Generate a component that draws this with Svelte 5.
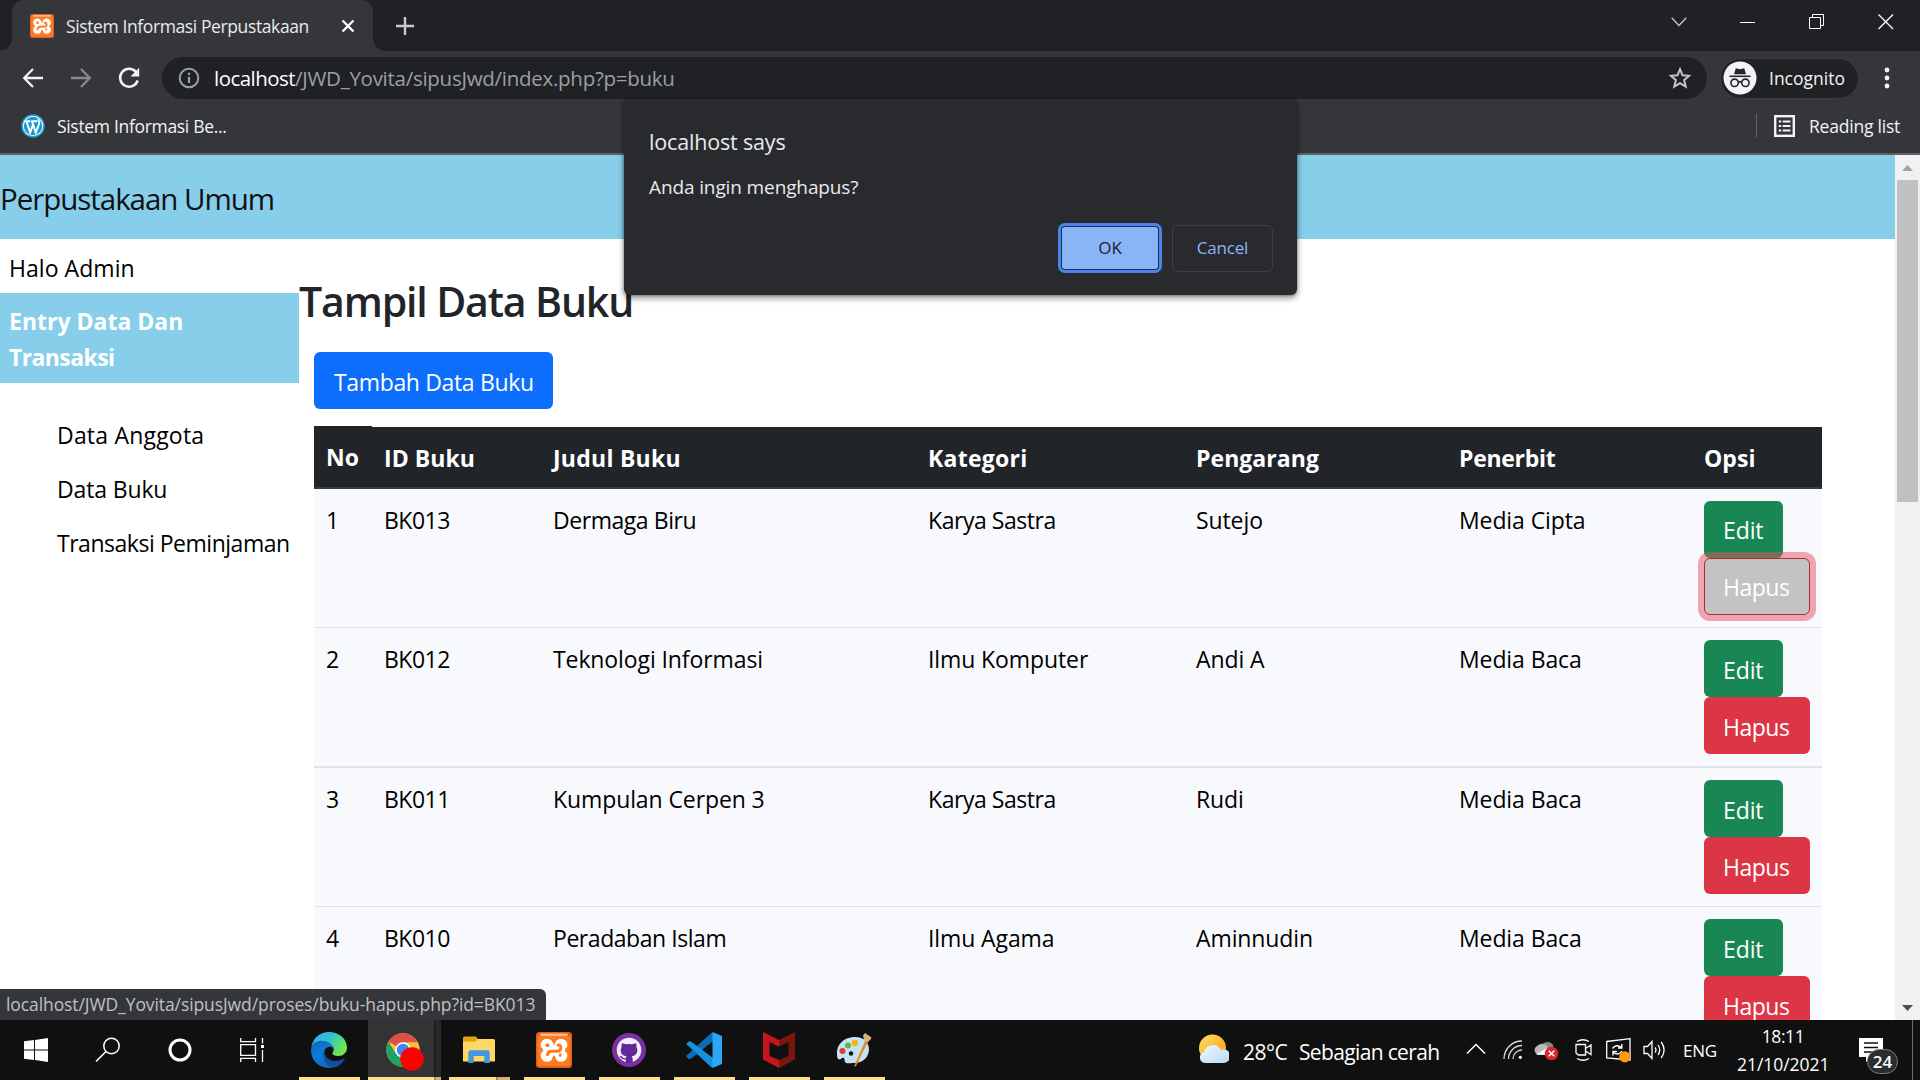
<script>
  const rows = [
    { no: 1, id: 'BK013', judul: 'Dermaga Biru', kategori: 'Karya Sastra', pengarang: 'Sutejo', penerbit: 'Media Cipta', active: true },
    { no: 2, id: 'BK012', judul: 'Teknologi Informasi', kategori: 'Ilmu Komputer', pengarang: 'Andi A', penerbit: 'Media Baca', thick: true },
    { no: 3, id: 'BK011', judul: 'Kumpulan Cerpen 3', kategori: 'Karya Sastra', pengarang: 'Rudi', penerbit: 'Media Baca' },
    { no: 4, id: 'BK010', judul: 'Peradaban Islam', kategori: 'Ilmu Agama', pengarang: 'Aminnudin', penerbit: 'Media Baca' }
  ];
  const narrow = ['Karya Sastra', 'Peradaban Islam', 'Dermaga Biru'];
</script>

{#snippet xampp(size)}
  <svg width={size} height={size} viewBox="0 0 36 36">
    <rect width="36" height="36" rx="3.5" fill="#e0601c" />
    <rect x="1.5" y="4" width="33" height="30" rx="2" fill="#fb7a24" />
    <rect x="4" y="1.5" width="28" height="2.6" rx="1.3" fill="#fbb78b" />
    <g fill="#fff"><circle cx="11" cy="13" r="6.300" /><circle cx="25" cy="13" r="6.300" /><circle cx="11" cy="23.500" r="6.300" /><circle cx="25" cy="23.500" r="6.300" /><rect x="7.500" y="12.500" width="21" height="11" /></g>
    <g fill="none" stroke="#fb7a24" stroke-width="3" stroke-linecap="round"><path d="M18 6.500V9.500" stroke-width="2.500" /><path d="M11.500 22.800Q12 19.300 15.500 19.300H21Q24.800 19 24.800 15.800 24.800 12.500 22 13.200" /><path d="M18 26V30M24.200 22.800V23.300" /><circle cx="11.500" cy="13.300" r="1" stroke-width="2" /></g>
    <path d="M3 18 6.500 15.800V20.500ZM33 18 29.500 15.800V20.500Z" fill="#fb7a24" />
  </svg>
{/snippet}

<div class="screen">
  <div class="tabstrip">
    <div class="tab">
      <span class="favicon">{@render xampp(24)}</span>
      <span class="tabtitle">Sistem Informasi Perpustakaan</span>
      <svg class="tabclose" width="14" height="14" viewBox="0 0 14 14"><path d="M1.500 1.500 12.500 12.500M12.500 1.500 1.500 12.500" stroke="#fff" stroke-width="2.400" /></svg>
    </div>
    <svg class="newtab" width="18" height="18" viewBox="0 0 18 18"><path d="M9 0V18M0 9H18" stroke="#c8cacd" stroke-width="2.400" /></svg>
    <div class="winctl">
      <svg width="16" height="10" viewBox="0 0 16 10"><path d="M.7 .7 8 8.500 15.300 .7" fill="none" stroke="#c5c6c8" stroke-width="1.300" /></svg>
      <svg width="16" height="16" viewBox="0 0 16 16"><path d="M0 8.500H15" stroke="#fff" /></svg>
      <svg width="16" height="16" viewBox="0 0 16 16"><path d="M.5 3.500H11.500V14.500H.5ZM3.500 3.500V.5H14.500V11.500H11.500" fill="none" stroke="#fff" /></svg>
      <svg width="16" height="16" viewBox="0 0 16 16"><path d="M.5 .5 15 15M15 .5 .5 15" stroke="#fff" stroke-width="1.300" /></svg>
    </div>
  </div>

  <div class="toolbar">
    <svg class="nav" width="24" height="24" viewBox="0 0 24 24"><path d="M22 12H4M12 3 3.200 12 12 21" fill="none" stroke="#f1f3f4" stroke-width="2.300" /></svg>
    <svg class="nav" width="24" height="24" viewBox="0 0 24 24"><path d="M2 12H20M12 3 20.800 12 12 21" fill="none" stroke="#88898c" stroke-width="2.300" /></svg>
    <svg class="nav" width="24" height="24" viewBox="0 0 24 24"><path d="M19.500 6.500A9 9 0 1 0 20.700 14.500" fill="none" stroke="#f1f3f4" stroke-width="2.500" /><path d="M22.200 1.800V10.500H13.500Z" fill="#f1f3f4" /></svg>
    <div class="omnibox">
      <svg width="22" height="22" viewBox="0 0 22 22"><circle cx="11" cy="11" r="9.300" fill="none" stroke="#9aa0a6" stroke-width="2" /><path d="M11 9.800V16M11 5.800V8" stroke="#9aa0a6" stroke-width="2.200" /></svg>
      <span class="url"><b>localhost</b>/JWD_Yovita/sipusJwd/index.php?p=buku</span>
      <svg width="22" height="22" viewBox="0 0 22 22"><path d="M11 2.200 13.500 8.300 20.200 8.800 15.100 13.100 16.700 19.600 11 16.100 5.300 19.600 6.900 13.100 1.800 8.800 8.500 8.300Z" fill="none" stroke="#c4c6c9" stroke-width="2" /></svg>
    </div>
    <div class="incog">
      <svg width="34" height="34" viewBox="0 0 34 34">
        <circle cx="17" cy="17" r="16.500" fill="#f1f3f4" />
        <path d="M12.800 7.300 17 8.200 21.200 7.300 23 13.300H11Z" fill="#25262a" />
        <path d="M6.500 15.300H27.500" stroke="#25262a" stroke-width="1.600" />
        <g fill="none" stroke="#25262a" stroke-width="1.600"><circle cx="11.600" cy="21.800" r="3.700" /><circle cx="22.400" cy="21.800" r="3.700" /><path d="M15.300 21.300Q17 20 18.700 21.300" /></g>
      </svg>
      <span>Incognito</span>
    </div>
    <svg class="dots" width="6" height="22" viewBox="0 0 6 22"><g fill="#f1f3f4"><circle cx="3" cy="3" r="2.400" /><circle cx="3" cy="11" r="2.400" /><circle cx="3" cy="19" r="2.400" /></g></svg>
  </div>

  <div class="bookmarks">
    <svg width="24" height="24" viewBox="0 0 24 24">
      <circle cx="12" cy="12" r="11.800" fill="#1a9ad3" /><circle cx="12" cy="12" r="10.200" fill="#fff" /><circle cx="12" cy="12" r="9.200" fill="#1a9ad3" />
      <path d="M3.800 7.300H9.400M10.300 7.300H16M5.500 7.500 9.200 18.500 12 10.500M11 7.500 14.800 18.500 18.200 9.500Q18.300 7 16.800 5.300" fill="none" stroke="#fff" stroke-width="2" />
    </svg>
    <span class="bm">Sistem Informasi Be...</span>
    <i class="sep"></i>
    <svg width="21" height="22" viewBox="0 0 21 22"><rect x="1.200" y="1.200" width="18.600" height="19.600" fill="none" stroke="#f1f3f4" stroke-width="2.400" /><path d="M4.800 6.500H7.200M8.700 6.500H16.400M4.800 11H7.200M8.700 11H16.400M4.800 15.500H7.200M8.700 15.500H16.400" stroke="#f1f3f4" stroke-width="2.200" /></svg>
    <span class="rl">Reading list</span>
  </div>

  <div class="page">
    <div class="doc">
      <header>Perpustakaan Umum</header>
      <div class="body">
        <aside>
          <p class="halo">Halo Admin</p>
          <p class="entry"><span>Entry Data Dan</span><br /><span class="tr">Transaksi</span></p>
          <ul>
            <li class="ag">Data Anggota</li>
            <li class="db">Data Buku</li>
            <li class="tp">Transaksi Peminjaman</li>
          </ul>
        </aside>
        <main>
          <h2>Tampil Data Buku</h2>
          <span class="btn blue">Tambah Data Buku</span>
          <div class="table">
            <div class="row head">
              <div class="first">No</div><div>ID Buku</div><div class="jb">Judul Buku</div><div class="jb">Kategori</div><div>Pengarang</div><div class="pb">Penerbit</div><div>Opsi</div>
            </div>
            {#each rows as r}
              <div class="row" class:thick={r.thick}>
                <div>{r.no}</div>
                <div class="tight">{r.id}</div>
                <div class:narrow={narrow.includes(r.judul)}>{r.judul}</div>
                <div class:narrow={narrow.includes(r.kategori)}>{r.kategori}</div>
                <div>{r.pengarang}</div>
                <div>{r.penerbit}</div>
                <div class="ops"><span class="btn green">Edit</span><span class="btn red" class:active={r.active}>Hapus</span></div>
              </div>
            {/each}
          </div>
        </main>
      </div>
    </div>
    <div class="scroll">
      <svg width="25" height="25" viewBox="0 0 25 25"><path d="M7 16 12.500 10 18 16Z" fill="#a3a3a3" /></svg>
      <div class="thumb"></div>
      <svg width="25" height="25" viewBox="0 0 25 25"><path d="M7 10 12.500 16 18 10Z" fill="#505050" /></svg>
    </div>
    <div class="status">localhost/JWD_Yovita/sipusJwd/proses/buku-hapus.php?id=BK013</div>
  </div>

  <div class="taskbar">
    <div class="sys">
      <svg width="24" height="24" viewBox="0 0 24 24"><path d="M0 3.300 10 2V11.500H0ZM11 1.900 24 0V11.500H11ZM0 12.500H10V22L0 20.700ZM11 12.500H24V24L11 22.100Z" fill="#fff" /></svg>
    </div>
    <div class="sys">
      <svg width="26" height="26" viewBox="0 0 26 26"><circle cx="16.500" cy="9" r="7.700" fill="none" stroke="#fff" stroke-width="1.500" /><path d="M11 14.500 1 24.500" stroke="#fff" stroke-width="1.600" /></svg>
    </div>
    <div class="sys">
      <svg width="24" height="24" viewBox="0 0 24 24"><circle cx="12" cy="12" r="10" fill="none" stroke="#fff" stroke-width="3" /></svg>
    </div>
    <div class="sys">
      <svg width="24" height="24" viewBox="0 0 24 24"><path d="M.7 0V3.700H15.500V0M.7 24V20.300H15.500V24M.7 6.700H15.500V17.300H.7ZM22.500 0V5.500M22.500 12V24" fill="none" stroke="#fff" stroke-width="1.300" /><rect x="21" y="7" width="3" height="3" fill="#fff" /></svg>
    </div>
    <div class="app edge">
      <svg width="36" height="36" viewBox="0 0 36 36">
        <defs>
          <linearGradient id="eg" x1="0" y1="0" x2="1" y2=".5"><stop offset="0" stop-color="#35a8ee" /><stop offset=".5" stop-color="#2fc3d0" /><stop offset="1" stop-color="#6fe84a" /></linearGradient>
          <linearGradient id="eb" x1="0" y1="0" x2=".6" y2="1"><stop offset="0" stop-color="#1464b4" /><stop offset=".5" stop-color="#0b7bdc" /><stop offset="1" stop-color="#0f6ac4" /></linearGradient>
        </defs>
        <path d="M.3 15C2 5.500 9.500 0 18 0 28 0 36 7 36 15.500 36 21 32 24 27.500 24 23.500 24 21.300 22.500 21.300 21.500 21.300 20.500 22.700 20 22.700 17.500 22.700 14 19 11 14 9.500 7 9 2 12 .3 15Z" fill="url(#eg)" />
        <path d="M.2 16C1.500 11 6 8.700 11 8.700 17.500 8.700 22 12.500 22.500 16.500 20 13.500 14.500 14.500 13 19.500 11.500 27 17.500 33 22.500 35.300 10 38.500-1.500 29 .2 16Z" fill="url(#eb)" />
        <path d="M14.300 16.500C12 22 16 28.500 23 29 28 29.200 31 27.500 33 26.500 34 26.300 33.800 27.300 33 28.500 30 32.500 26 35.200 22.500 35.600 13 34 10 23 14.300 16.500Z" fill="#12509c" />
      </svg>
    </div>
    <div class="app chrome">
      <svg width="38" height="38" viewBox="0 0 38 38">
        <circle cx="17" cy="17" r="16.700" fill="#f7c33b" />
        <path d="M17 17 2.500 8.700A16.700 16.700 0 0 1 31.500 8.700L31.800 9.300H17Z" fill="#dd5144" />
        <path d="M2.500 8.700A16.700 16.700 0 0 0 17 33.700L24 20.500 17 17 9.800 20.500Z" fill="#1da362" />
        <circle cx="17" cy="17" r="7.800" fill="#fff" /><circle cx="17" cy="17" r="6.200" fill="#4285f4" />
        <circle cx="26" cy="26" r="11.800" fill="#fe0000" />
      </svg>
    </div>
    <div class="app files">
      <svg width="32" height="28" viewBox="0 0 32 28"><path d="M0 2Q0 .5 1.500 .5H13L15 3V7H0Z" fill="#e0a30c" /><path d="M0 5.500H12.500L15 3H30.500Q32 3 32 4.500V25.500H0Z" fill="#ffd765" /><path d="M5.300 27V16.500Q5.300 14.300 7.500 14.300H24.500Q26.700 14.300 26.700 16.500V27H21.300V20H10.700V27Z" fill="#3f9ae0" /></svg>
    </div>
    <div class="app">{@render xampp(36)}</div>
    <div class="app">
      <svg width="36" height="36" viewBox="0 0 36 36">
        <circle cx="18" cy="18" r="17" fill="#7a2fa3" /><circle cx="18" cy="18" r="12.300" fill="#f2eef7" />
        <path d="M11 11.200 15 12.300Q18 11.600 21 12.300L25 11.200Q26 13.500 25.500 15.200 27 17.500 26 20.500 25 23.500 20.800 24.200 22 25.500 21.700 31H14.700V27.500Q11 28 9.500 25.500L8.500 23.800Q11 24 12 25.800 13.500 26.800 15 25.700L15.400 24.200Q11 23.500 10 20.500 9.200 17.500 10.500 15.200 10 13.500 11 11.200Z" fill="#60289a" />
      </svg>
    </div>
    <div class="app">
      <svg width="36" height="36" viewBox="0 0 36 36"><path d="M0 24 2.500 27 5 26.800 27 9V.5L25.500 .7Z" fill="#0b6db5" /><path d="M.2 12 2.500 9.500 5 9.600 27 26V35.700L25 35Z" fill="#1490df" /><path d="M26.500 0 36 4V32L26.500 36Z" fill="#2aa7f5" /></svg>
    </div>
    <div class="app">
      <svg width="32" height="36" viewBox="0 0 32 36"><path d="M0 0 16 8V14.500L6.500 10V24L16 28V36L0 27.500Z" fill="#c4161c" /><path d="M32 0 16 8V14.500L25.500 10V24L16 28V36L32 27.500Z" fill="#7b150f" /></svg>
    </div>
    <div class="app">
      <svg width="36" height="36" viewBox="0 0 36 36">
        <path d="M17 5C27 4 33 10 33 17 33 25 27 31 18 31 13 31 10 32 9 30 8 27 9 25 6 26 3 29 1 27 1 23 0 13 7 6 17 5Z" fill="#c4e3f2" />
        <circle cx="6.500" cy="19" r="3" fill="#e43b36" /><circle cx="12" cy="13.500" r="3" fill="#5fb648" /><circle cx="19" cy="11" r="3.300" fill="#f7b417" /><circle cx="15" cy="21.500" r="2.200" fill="#101010" />
        <path d="M29.500 8 32 9.500 20 34 17.800 35Z" fill="#e7882a" /><path d="M27 3.500 29 1 35.500 5.500 34.500 7.500 31.500 10.500 28.300 8.500Z" fill="#dcb27c" />
      </svg>
    </div>

    <div class="tray">
      <svg class="weather" width="30" height="30" viewBox="0 0 30 30">
        <defs><linearGradient id="sun" x1="0" y1="0" x2="1" y2="1"><stop offset="0" stop-color="#ffdf6a" /><stop offset="1" stop-color="#fb9a0c" /></linearGradient><linearGradient id="cl" x1="0" y1="0" x2="1" y2="1"><stop offset="0" stop-color="#eef8ff" /><stop offset="1" stop-color="#b5dcf6" /></linearGradient></defs>
        <circle cx="13.500" cy="14" r="13.500" fill="url(#sun)" />
        <path d="M6 29A5.500 5.500 0 0 1 5 18.200 9 9 0 0 1 21.800 16 6.800 6.800 0 1 1 23.500 29Z" fill="url(#cl)" />
      </svg>
      <span class="temp">28°C</span><span class="cond">Sebagian cerah</span>
      <svg class="up" width="20" height="12" viewBox="0 0 20 12"><path d="M1 10.500 10 1.500 19 10.500" fill="none" stroke="#fff" stroke-width="1.500" /></svg>
      <svg class="wifi" width="20" height="20" viewBox="0 0 20 20"><g fill="none" stroke="#dcdcdc" stroke-width="1.300"><path d="M1 19A18 18 0 0 1 19 1" /><path d="M5.500 19A13.500 13.500 0 0 1 19 5.500" /><path d="M10 19A9 9 0 0 1 19 10" /></g><circle cx="17.300" cy="17.300" r="1.600" fill="#fff" /></svg>
      <svg class="cloud" width="25" height="22" viewBox="0 0 25 22"><path d="M8 6A6.500 6.500 0 0 1 19 6Q20 9 18 12H9Z" fill="#8a8a8a" /><path d="M4 16A5 5 0 0 1 3 7 7 7 0 0 1 13 6.500L15 16Z" fill="#b9b9b9" /><path d="M2 15.500 13 9 17 16Z" fill="#fff" /><circle cx="17.500" cy="14.500" r="6.800" fill="#d9262f" /><path d="M14.700 11.700 20.300 17.300M20.300 11.700 14.700 17.300" stroke="#fff" stroke-width="1.500" /></svg>
      <svg class="cam" width="17" height="22" viewBox="0 0 17 22"><path d="M1 5.500H10.500V16H3.500L1 14ZM10.500 9.500 16 6V15.500L10.500 12M2 2.500Q8 -1 14 2.500M2 19.500Q8 23 14 19.500" fill="none" stroke="#fff" stroke-width="1.300" /></svg>
      <svg class="upd" width="25" height="25" viewBox="0 0 25 25"><path d="M.7 3.500 24 .7V22L.7 20Z" fill="none" stroke="#fff" stroke-width="1.300" /><path d="M6.500 10.500Q10 5.500 15.500 9.500M15.800 6V10H12M16 13Q13 18 7.500 14.500M7 17.500V13.500H11" fill="none" stroke="#fff" stroke-width="1.400" /><circle cx="18.800" cy="18.800" r="5.600" fill="#ff9b0a" /></svg>
      <svg class="vol" width="23" height="20" viewBox="0 0 23 20"><path d="M1 6.500H4.500L9 1.500V18.500L4.500 13.500H1Z" fill="none" stroke="#fff" stroke-width="1.300" /><path d="M12 7.500Q14 10 12 12.500M15 5Q18.500 10 15 15M18.200 2Q24 10 18.200 18" fill="none" stroke="#fff" stroke-width="1.300" /></svg>
      <span class="lang">ENG</span>
      <div class="clock"><span class="time">18:11</span><span>21/10/2021</span></div>
      <div class="note">
        <svg width="24" height="24" viewBox="0 0 24 24"><path d="M0 0H24V19H12L7 24V19H0Z" fill="#fff" /><path d="M5 5H19M5 9.500H19M5 14H19" stroke="#101010" stroke-width="1.300" /></svg>
        <span class="badge">24</span>
      </div>
      <i class="peek"></i>
    </div>
  </div>

  <div class="dialog">
    <p class="dt">localhost says</p>
    <p class="dm">Anda ingin menghapus?</p>
    <div class="da"><span class="ok">OK</span><span class="cancel">Cancel</span></div>
  </div>
</div>

<style>
  :global(body) { margin: 0; overflow: hidden; }
  .screen { position: relative; width: 1920px; height: 1080px; display: flex; flex-direction: column; overflow: hidden; background: #fff; font-family: "Open Sans", "Noto Sans", sans-serif; font-size: 23px; color: #000; white-space: nowrap; }
  .screen * { box-sizing: border-box; }
  svg { display: block; flex: none; }
  p, h2, ul { margin: 0; padding: 0; }
  li { list-style: none; }

  .tabstrip { height: 51px; flex: none; background: #202124; display: flex; }
  .tab { width: 361px; height: 51px; margin-left: 12px; background: #35363a; border-radius: 12px 12px 0 0; display: flex; align-items: center; padding: 0 0 0 18px; position: relative; color: #e8eaed; font-size: 17.5px; letter-spacing: -0.39px; }
  .tab::before, .tab::after { content: ''; position: absolute; bottom: 0; width: 12px; height: 12px; }
  .tab::before { left: -12px; background: radial-gradient(circle at 0 0, #202124 11.5px, #35363a 12px); }
  .tab::after { right: -12px; background: radial-gradient(circle at 100% 0, #202124 11.5px, #35363a 12px); }
  .tabtitle { width: 275px; margin-left: 12px; }
  .newtab { margin: 17px 0 0 23px; }
  .winctl { margin-left: auto; height: 43px; display: flex; align-items: center; gap: 53px; padding-right: 26px; }

  .toolbar { height: 54px; flex: none; background: #35363a; display: flex; align-items: center; padding-left: 21px; }
  .nav { margin-right: 24px; }
  .omnibox { width: 1545px; height: 42px; margin-left: -3px; border-radius: 21px; background: #202124; display: flex; align-items: center; padding: 0 16px; }
  .url { flex: 1; margin-left: 14px; font-size: 20.5px; letter-spacing: -0.27px; color: #9aa0a6; }
  .url b { font-weight: 400; color: #fff; letter-spacing: -0.55px; }
  .incog { width: 139px; height: 41px; margin-left: 13px; border: 1.5px solid #3c3d41; border-radius: 21px; background: #202124; display: flex; align-items: center; padding-left: 2px; color: #f1f3f4; font-size: 17.5px; }
  .incog span { margin-left: 12px; }
  .dots { margin-left: 25px; }

  .bookmarks { height: 50px; flex: none; background: #35363a; border-bottom: 2px solid #5f6064; display: flex; align-items: center; padding: 0 0 6px 21px; color: #f1f3f4; font-size: 17.5px; }
  .bm { margin-left: 12px; letter-spacing: -0.32px; flex: 1; }
  .sep { width: 1px; height: 24px; background: #5f6368; margin-right: 17px; }
  .rl { width: 111px; margin-left: 14px; letter-spacing: -0.22px; }

  .page { height: 865px; flex: none; display: flex; position: relative; overflow: hidden; }
  .doc { width: 1895px; }
  header { height: 84px; background: #87ceeb; padding-top: 2px; line-height: 84px; font-size: 29.5px; letter-spacing: -1.04px; color: #111; }
  .body { display: flex; line-height: 36px; }
  aside { width: 299px; flex: none; letter-spacing: 0.05px; }
  .halo { height: 54px; padding: 11px 9px 0; }
  .entry { height: 90px; padding: 10px 9px 0; background: #87ceeb; color: #fff; font-weight: 700; letter-spacing: 0; }
  .tr { letter-spacing: -0.6px; }
  ul { margin-top: 24px; }
  li { height: 54px; padding: 10px 0 0 57px; }
  .ag { letter-spacing: 0.2px; }
  .db { letter-spacing: -0.14px; }
  .tp { letter-spacing: -0.48px; }
  main { padding: 37px 0 0 15px; width: 1523px; }
  h2 { height: 50px; line-height: 50px; margin: 0 0 26px -15px; font-size: 41px; font-weight: 600; letter-spacing: -1.13px; color: #212529; }
  .btn { display: block; height: 57px; line-height: 59px; border-radius: 6px; color: #fff; padding-left: 19px; }
  .blue { width: 239px; line-height: 61px; padding-left: 20px; background: #0d6efd; letter-spacing: -0.35px; }
  .table { margin-top: 17px; }
  .row { display: grid; grid-template-columns: 58px 169px 375px 268px 263px 245px 130px; height: 139px; background: #f8f9fc; border-bottom: 1px solid #dee2e6; letter-spacing: -0.1px; }
  .row > div { padding: 13px 0 0 12px; }
  .row > .ops { padding-top: 12px; }
  .row .narrow { letter-spacing: -0.45px; }
  .thick { height: 140px; border-bottom-width: 2px; }
  .row .tight { letter-spacing: -0.5px; }
  .head { height: 63px; background: none; border: 0; color: #fff; font-weight: 700; letter-spacing: 0.05px; }
  .head > div { background: #212529; border-bottom: 2px solid #373b3e; margin-top: 1px; }
  .head .first { margin-top: 0; }
  .head .jb { letter-spacing: 0.25px; }
  .head .pb { letter-spacing: -0.3px; }
  .green { width: 79px; background: #198754; }
  .red { width: 106px; background: #dc3545; letter-spacing: -0.5px; }
  .active { background: #c3c3c3; border: 1px solid #b02a37; line-height: 57px; padding-left: 18px; box-shadow: 0 0 0 6px rgba(225, 83, 97, 0.5); }
  .row:not(:nth-child(2)) .btn { line-height: 61px; }

  .scroll { width: 25px; background: #f1f1f1; display: flex; flex-direction: column; align-items: center; }
  .thumb { width: 21px; height: 322px; background: #c1c1c1; margin-bottom: auto; }
  .status { position: absolute; left: 0; bottom: 0; width: 546px; height: 31px; line-height: 31px; padding-left: 6px; background: #35363a; border-radius: 0 6px 0 0; color: #bdc1c6; font-size: 17.5px; letter-spacing: -0.09px; }

  .taskbar { height: 60px; flex: none; background: #101010; display: flex; color: #fff; }
  .sys { width: 72px; display: flex; align-items: center; justify-content: center; }
  .app { width: 61px; margin-right: 14px; background: linear-gradient(#ffe08a, #ffe08a) 0 57px / 100% 3px no-repeat; display: flex; align-items: center; justify-content: center; padding-right: 2px; }
  .edge { margin-left: 11px; margin-right: 8px; }
  .chrome { width: 73px; margin-right: 8px; padding: 4px 0 0 0; background: linear-gradient(90deg, #ffe08a 66px, #a38f59 66px, #a38f59 68px, #d1b471 68px) 0 57px / 100% 3px no-repeat, linear-gradient(90deg, #333 66px, #202020 66px, #202020 68px, #292929 68px); }
  .files { background: linear-gradient(90deg, #ffe08a 47px, #a38f59 47px, #a38f59 49px, #d1b471 49px) 0 57px / 100% 3px no-repeat; }

  .tray { margin-left: auto; height: 60px; display: flex; align-items: center; }
  .weather { margin-top: -2px; }
  .temp { width: 57px; margin: 3px 0 0 14px; font-size: 21px; letter-spacing: -0.5px; }
  .cond { width: 167px; margin-top: 3px; margin-left: -1px; font-size: 21px; letter-spacing: -0.65px; }
  .up { margin-top: -2px; }
  .wifi { margin-left: 17px; }
  .cloud { margin-left: 11px; }
  .cam { margin-left: 16px; }
  .upd { margin-left: 14px; }
  .vol { margin-left: 12px; }
  .lang { width: 54px; margin-left: 17px; font-size: 17px; letter-spacing: -0.3px; }
  .clock { width: 92px; height: 56px; display: flex; flex-direction: column; text-align: center; font-size: 17.5px; line-height: 28px; letter-spacing: -0.05px; }
  .time { letter-spacing: -0.4px; }
  .note { position: relative; margin: 0 29px 0 30px; }
  .badge { position: absolute; left: 8px; top: 11px; width: 31px; height: 25px; border-radius: 13px; border: 1px solid #77797b; background: #2a2c2e; font-size: 17px; line-height: 24px; font-weight: 600; text-align: center; }
  .peek { width: 8px; height: 60px; border-left: 1px solid #6b6b6b; }

  .dialog { position: absolute; left: 624px; top: 99px; width: 673px; height: 196px; background: #292a2d; border-radius: 6px; box-shadow: 0 3px 6px rgba(0, 0, 0, 0.45), 0 0 3px rgba(0, 0, 0, 0.4); color: #e8eaed; padding: 28px 24px 0 25px; }
  .dt { height: 46px; line-height: 30px; font-size: 21.5px; letter-spacing: -0.17px; }
  .dm { height: 53px; line-height: 28px; font-size: 19px; letter-spacing: -0.12px; }
  .da { display: flex; justify-content: flex-end; gap: 14px; font-size: 17px; font-weight: 500; line-height: 42px; text-align: center; }
  .ok { width: 96px; height: 42px; margin-top: 1px; background: #8ab4f8; border-radius: 3px; color: #202124; box-shadow: 0 0 0 1px #292a2d, 0 0 0 4px #4285f4; }
  .cancel { width: 101px; height: 47px; margin-top: -1px; line-height: 44px; border: 1px solid #3c4043; border-radius: 6px; color: #8ab4f8; letter-spacing: -0.2px; }
</style>
